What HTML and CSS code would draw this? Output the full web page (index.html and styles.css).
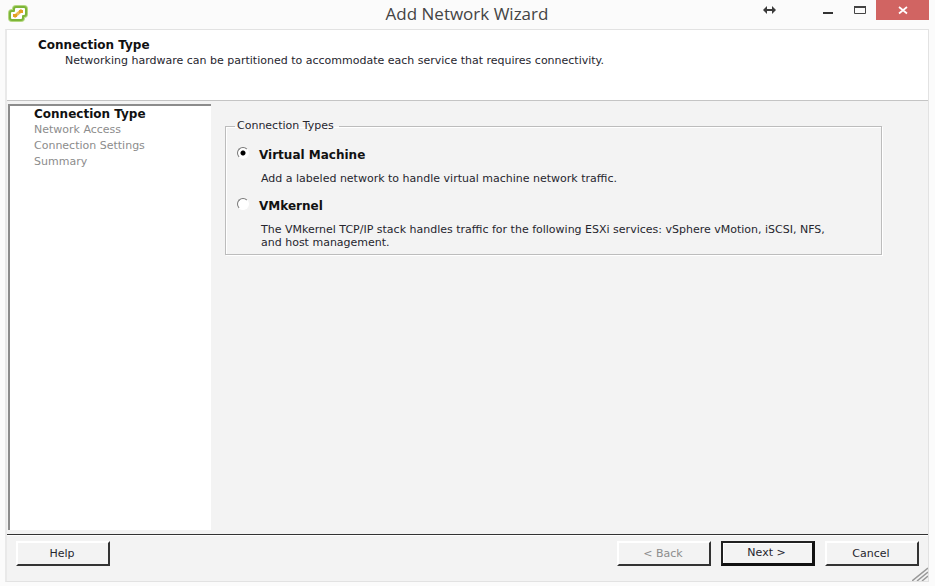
FILE: index.html
```
<!DOCTYPE html>
<html lang="en">
<head>
<meta charset="utf-8">
<title>Add Network Wizard</title>
<link rel="stylesheet" href="styles.css">
</head>
<body>
<div class="window">
  <header class="titlebar">
    <svg class="app-icon" width="22" height="18" viewBox="0 0 22 18" aria-hidden="true">
      <path d="M9 2h8q2 0 2 2v5q0 2-2 2h-1v2q0 2-2 2H5q-2 0-2-2V8q0-2 2-2h2V4q0-2 2-2z" fill="#fff" stroke="#b4d880" stroke-width="4" stroke-linejoin="round"/>
      <path d="M9 2h8q2 0 2 2v5q0 2-2 2h-1v2q0 2-2 2H5q-2 0-2-2V8q0-2 2-2h2V4q0-2 2-2z" fill="#fff" stroke="#7db538" stroke-width="2" stroke-linejoin="round"/>
      <path d="M7 12l8-7" stroke="#eebb55" stroke-width="3"/>
      <path d="M6 9h4v3H6zM12 5h4v3h-4z" fill="#e5a024"/>
    </svg>
    <h1 class="title">Add Network Wizard</h1>
    <div class="window-controls">
      <svg class="resize-icon" width="13" height="8" viewBox="0 0 13 8" aria-hidden="true">
        <path d="M3 4h7" stroke="#3b3b3b" stroke-width="2"/>
        <path d="M0 4l4-4v8zM13 4l-4-4v8z" fill="#3b3b3b"/>
      </svg>
      <button class="control" type="button" aria-label="Minimize">
        <svg width="10" height="20" viewBox="0 0 10 20"><path d="M0 13h10" stroke="#333" stroke-width="2"/></svg>
      </button>
      <button class="control" type="button" aria-label="Maximize">
        <svg width="12" height="20" viewBox="0 0 12 20"><path d="M.5 6v7.500h11V6" fill="none" stroke="#444"/><path d="M0 7h12" stroke="#444" stroke-width="2"/></svg>
      </button>
      <button class="control close" type="button" aria-label="Close">
        <svg width="10" height="20" viewBox="0 0 10 20"><path d="M1 7l8 6.500M9 7l-8 6.500" stroke="#fff" stroke-width="1.700"/></svg>
      </button>
    </div>
  </header>
  <main class="dialog">
    <section class="banner">
      <h2 class="banner-title">Connection Type</h2>
      <p class="banner-text">Networking hardware can be partitioned to accommodate each service that requires connectivity.</p>
    </section>
    <div class="body">
      <nav class="steps" aria-label="Wizard steps">
        <ol>
          <li class="current" aria-current="step">Connection Type</li>
          <li>Network Access</li>
          <li>Connection Settings</li>
          <li>Summary</li>
        </ol>
      </nav>
      <section class="content">
        <fieldset class="group">
          <legend>Connection Types</legend>
          <div class="option">
            <input type="radio" name="type" id="type-vm" checked>
            <label for="type-vm">Virtual Machine</label>
            <p>Add a labeled network to handle virtual machine network traffic.</p>
          </div>
          <div class="option">
            <input type="radio" name="type" id="type-kernel">
            <label for="type-kernel">VMkernel</label>
            <p>The VMkernel TCP/IP stack handles traffic for the following ESXi services: vSphere vMotion, iSCSI, NFS, and host management.</p>
          </div>
        </fieldset>
      </section>
    </div>
    <footer class="footer">
      <button class="button" type="button">Help</button>
      <div class="actions">
        <button class="button" type="button" disabled>&lt; Back</button>
        <button class="button default" type="button">Next &gt;</button>
        <button class="button" type="button">Cancel</button>
      </div>
      <svg class="grip" width="16" height="14" viewBox="0 0 16 14" aria-hidden="true">
        <path d="M0 14L16 1M5 14l11-9M10 14l6-5" stroke="#999" stroke-width="1.500"/>
      </svg>
    </footer>
  </main>
</div>
</body>
</html>
```
FILE: styles.css
```
* {
  box-sizing: border-box;
}

body {
  margin: 0;
  background: #fbfbfb;
  color: #26262e;
  font: 11px/16px "DejaVu Sans", Tahoma, sans-serif;
}

h1, h2, p, ol {
  margin: 0;
  padding: 0;
}

.window {
  display: flex;
  flex-direction: column;
  min-height: 100vh;
  padding: 0 6px 4px 5px;
}

.titlebar {
  display: grid;
  grid-template-columns: 1fr auto 1fr;
  align-items: start;
  height: 29px;
}

.app-icon {
  margin: 5px 0 0 2px;
}

.title {
  color: #444;
  font: 17px/28px "Open Sans", "Segoe UI", sans-serif;
}

.window-controls {
  display: flex;
  justify-content: flex-end;
}

.resize-icon {
  margin: 6px 36px 0 0;
}

.control {
  display: flex;
  justify-content: center;
  width: 32px;
  height: 20px;
  padding: 0;
  border: 0;
  background: transparent;
}

.close {
  width: 53px;
  background: #d16462;
}

.dialog {
  display: flex;
  flex: 1;
  flex-direction: column;
  border: 1px solid #e2e2e2;
  border-left: 2px solid #e9e9e9;
  background: #f3f3f3;
}

.banner {
  height: 71px;
  padding: 7px 31px;
  border-bottom: 1px solid #c4c4c4;
  background: #fff;
}

.banner-title {
  color: #111;
  font: bold 12px/16px "DejaVu Sans", Tahoma, sans-serif;
}

.banner-text {
  padding-left: 27px;
}

.body {
  display: flex;
  flex: 1;
  gap: 14px;
  padding: 3px 0 0 1px;
}

.steps {
  width: 203px;
  padding-left: 24px;
  border: solid #8c8c8c;
  border-width: 2px 0 0 2px;
  background: #fff;
  color: #8c8c8c;
}

.steps ol {
  list-style: none;
}

.steps .current {
  color: #111;
  font-size: 12px;
  font-weight: bold;
}

.content {
  flex: 1;
  padding: 14px 46px 0 0;
}

.group {
  margin: 0;
  padding: 13px 40px 5px 9px;
  border: 1px solid #bcbcbc;
  box-shadow: 1px 1px #fff, inset 1px 1px #fff;
}

.group legend {
  padding: 0 5px 0 2px;
}

.option {
  display: grid;
  grid-template-columns: 13px 1fr;
  column-gap: 11px;
  align-items: start;
}

.option + .option {
  margin-top: 13px;
}

.option input {
  appearance: none;
  width: 12px;
  height: 12px;
  margin: 0 0 0 2px;
  border: 1px solid;
  border-color: #777 #fff #fff #777;
  border-radius: 50%;
  background: #fff;
}

.option input:checked {
  background: radial-gradient(circle, #000 2px, #fff 3px);
}

.option label {
  color: #111;
  font-size: 12px;
  font-weight: bold;
}

.option p {
  grid-column: 2;
  margin-top: 9px;
  padding-left: 2px;
  line-height: 13px;
}

.footer {
  position: relative;
  display: flex;
  justify-content: space-between;
  height: 47px;
  margin-top: 4px;
  padding: 6px 9px 0;
  border-top: 1px solid #333;
  box-shadow: inset 0 1px #fff;
}

.actions {
  display: flex;
  gap: 10px;
}

.button {
  width: 94px;
  height: 25px;
  padding: 0 2px 0 0;
  border: 2px solid;
  border-color: #fff #333 #333 #fff;
  background: #f3f3f3;
  color: #26262e;
  font: inherit;
}

.button:disabled {
  color: #8c8c8c;
}

.default {
  border-color: #222 #111 #111 #222;
  border-width: 2px 3px 3px 2px;
  box-shadow: inset 1px 1px #fff;
}

.grip {
  position: absolute;
  right: 0;
  bottom: 0;
}
```
